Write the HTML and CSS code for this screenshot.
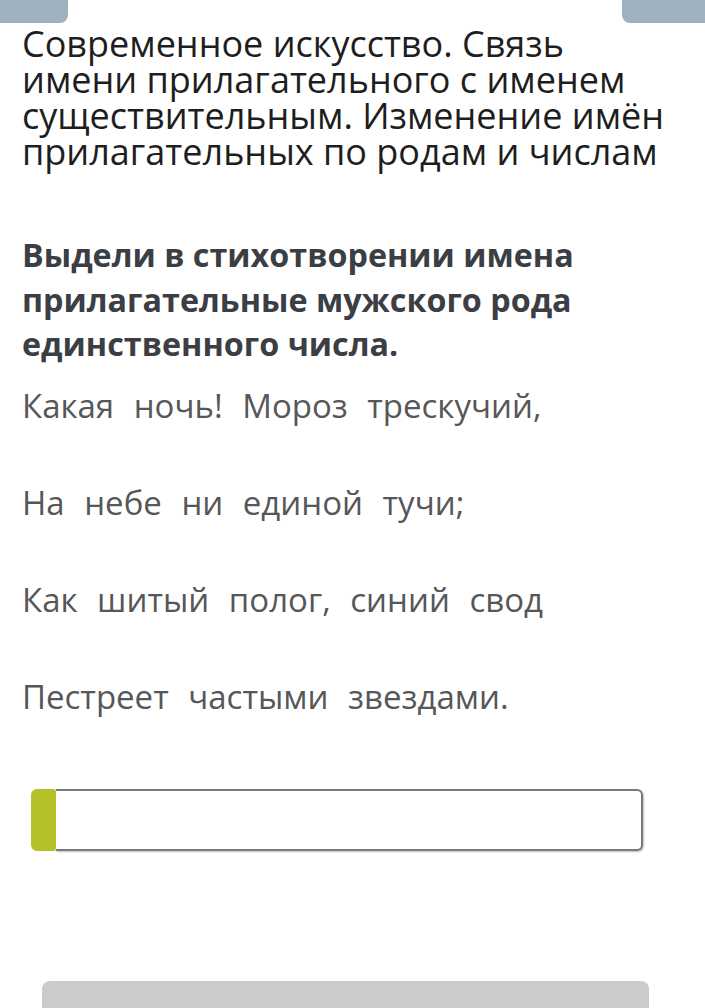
FILE: index.html
```html
<!DOCTYPE html>
<html lang="ru">
<head>
<meta charset="utf-8">
<link rel="stylesheet" href="styles.css">
</head>
<body>
<div class="page">
  <div class="tabs">
    <div class="tab tab-left"></div>
    <div class="tab tab-right"></div>
  </div>
  <h1 class="title">Современное искусство. Связь имени прилагательного с именем существительным. Изменение имён прилагательных по родам и числам</h1>
  <p class="task">Выдели в стихотворении имена прилагательные мужского рода единственного числа.</p>
  <div class="poem">
    <p class="line">Какая ночь! Мороз трескучий,</p>
    <p class="line">На небе ни единой тучи;</p>
    <p class="line">Как шитый полог, синий свод</p>
    <p class="line">Пестреет частыми звездами.</p>
  </div>
  <div class="answer">
    <div class="answer-mark"></div>
    <div class="answer-field"></div>
  </div>
  <div class="button-row">
    <div class="button"></div>
  </div>
</div>
</body>
</html>
```

FILE: styles.css
```css
* { box-sizing: border-box; }
html, body { margin: 0; padding: 0; background: #fff; }
body { font-family: "Open Sans", "Noto Sans", sans-serif; }
.page { width: 705px; height: 1008px; overflow: hidden; }
.tabs { display: flex; justify-content: space-between; height: 23px; }
.tab { background: #9eb1bf; height: 23px; }
.tab-left { width: 68px; border-radius: 0 0 8px 0; }
.tab-right { width: 83px; border-radius: 0 0 0 8px; }
.title {
  margin: 3px 0 0 22px;
  font-weight: 400;
  font-size: 36px;
  line-height: 36px;
  color: #1e1e1e;
  width: 665px;
}
.task {
  margin: 62px 0 0 22px;
  font-weight: 700;
  font-size: 32.3px;
  line-height: 44.5px;
  color: #3b3e43;
  width: 640px;
}
.poem {
  margin: 18px 0 0 22px;
  display: flex;
  flex-direction: column;
  gap: 53px;
}
.line {
  margin: 0;
  font-size: 33px;
  line-height: 44px;
  word-spacing: 11px;
  color: #555759;
}
.answer {
  margin: 70px 0 0 31px;
  width: 612px;
  height: 62px;
  display: flex;
}
.answer-mark {
  width: 25px;
  background: #b6c12a;
  border-radius: 6px 3px 3px 6px;
}
.answer-field {
  flex: 1;
  background: #fff;
  border: 2.5px solid #7a7a7a;
  border-left: none;
  border-radius: 0 6px 6px 0;
  box-shadow: 1px 1px 2px rgba(0,0,0,0.25);
}
.button-row { margin-top: 130px; padding: 0 56px 0 42px; }
.button { height: 40px; background: #cbcbcb; border-radius: 8px 8px 0 0; }
```
